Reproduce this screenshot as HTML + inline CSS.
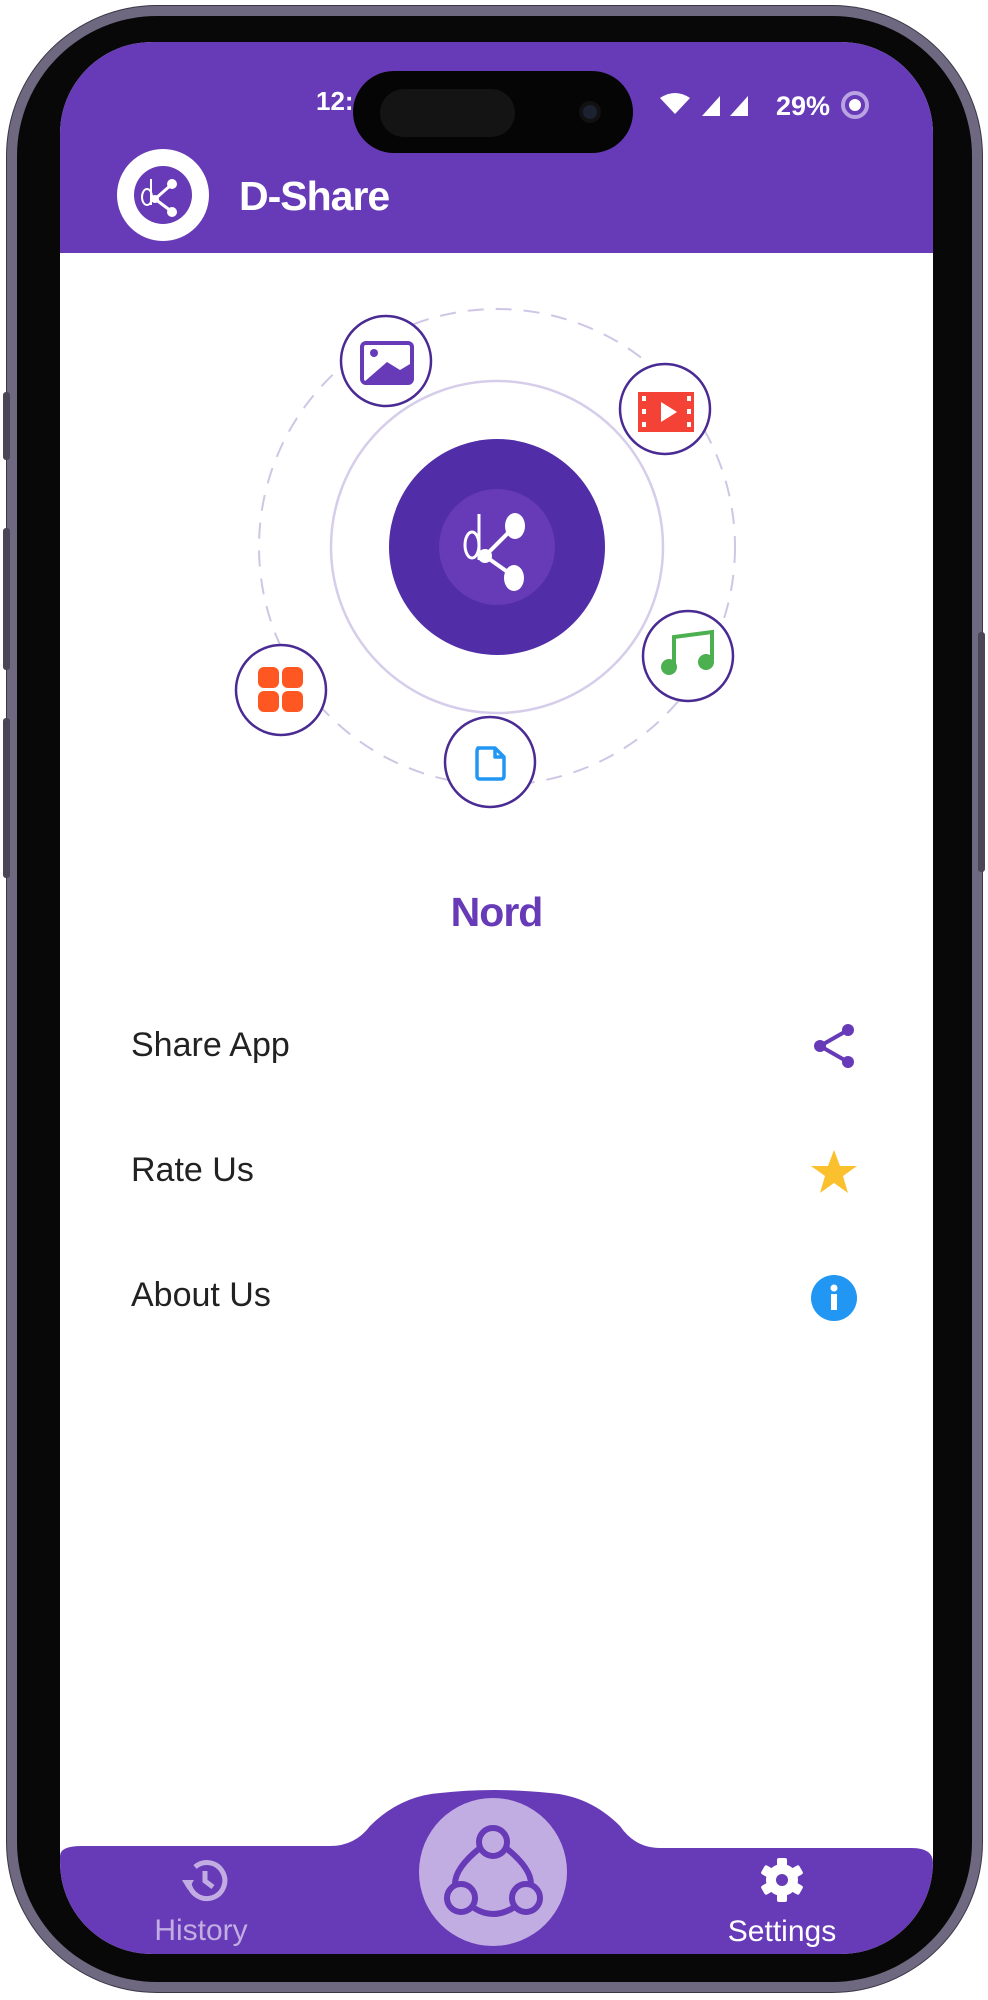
<!DOCTYPE html>
<html><head><meta charset="utf-8">
<style>
*{margin:0;padding:0;box-sizing:border-box}
body{width:988px;height:2000px;background:#fff;position:relative;overflow:hidden;font-family:"Liberation Sans",sans-serif}
.frame{position:absolute;left:7px;top:6px;width:975px;height:1986px;border-radius:150px;background:#6e6880;box-shadow:0 0 0 1px #3a3645}
.bezel{position:absolute;left:17px;top:16px;width:955px;height:1966px;border-radius:140px;background:#080808}
.screen{position:absolute;left:60px;top:42px;width:873px;height:1912px;border-radius:92px;background:#fff;overflow:hidden}
.header{position:absolute;left:0;top:0;width:873px;height:211px;background:#673ab7}
.island{position:absolute;left:353px;top:71px;width:280px;height:82px;border-radius:41px;background:#050505}
.btn{position:absolute;left:3px;width:7px;background:#4a4656;border-radius:3px}
.txt{position:absolute;left:131px;font-size:34px;color:#222;line-height:1}
</style></head><body>
<div class="frame"></div>
<div class="btn" style="top:392px;height:68px"></div>
<div class="btn" style="top:528px;height:142px"></div>
<div class="btn" style="top:718px;height:160px"></div>
<div class="btn" style="left:978px;top:632px;height:240px"></div>
<div class="bezel"></div>
<div class="screen">
  <div class="header"></div>
  <div style="position:absolute;left:256px;top:44px;color:#fff;font-size:26px;font-weight:bold">12:</div>
  <svg style="position:absolute;left:580px;top:42px" width="293" height="40" viewBox="0 0 293 40">
    <path d="M20 14 Q35 4 50 14 L35 30 Z" fill="#fff"/>
    <path d="M62 32 L80 12 L80 32 Z" fill="#fff"/>
    <path d="M90 32 L108 12 L108 32 Z" fill="#fff"/>
    <text x="136" y="31" font-family="Liberation Sans" font-size="27" font-weight="bold" fill="#fff">29%</text>
    <circle cx="215" cy="21" r="12" fill="none" stroke="#b9a3e3" stroke-width="4"/>
    <circle cx="215" cy="21" r="6" fill="#fff"/>
  </svg>
  <svg style="position:absolute;left:57px;top:107px" width="92" height="92" viewBox="0 0 92 92">
    <circle cx="46" cy="46" r="46" fill="#fff"/>
    <circle cx="46" cy="46" r="29" fill="#673ab7"/>
    <path d="M34 30 V56" stroke="#fff" stroke-width="2"/>
    <ellipse cx="30" cy="48" rx="5" ry="8" fill="none" stroke="#fff" stroke-width="2"/>
    <path d="M38 50 L54 36 M38 50 L54 62" stroke="#fff" stroke-width="3"/>
    <circle cx="38" cy="50" r="4" fill="#fff"/><circle cx="55" cy="35" r="5" fill="#fff"/><circle cx="55" cy="63" r="5" fill="#fff"/>
  </svg>
  <div style="position:absolute;left:179px;top:131px;color:#fff;font-size:41px;font-weight:bold;letter-spacing:-1px">D-Share</div>

  <svg style="position:absolute;left:0;top:211px" width="873" height="620" viewBox="0 211 873 620" >
    <g transform="translate(-60,-42)">
    <circle cx="497" cy="547" r="238" fill="none" stroke="#cfc6e6" stroke-width="2" stroke-dasharray="16 12"/>
    <circle cx="497" cy="547" r="166" fill="none" stroke="#d6cdea" stroke-width="2.5"/>
    <circle cx="497" cy="547" r="108" fill="#512da8"/>
    <circle cx="497" cy="547" r="58" fill="#673ab7"/>
    <path d="M479 514 V560" stroke="#fff" stroke-width="3"/>
    <ellipse cx="472" cy="545" rx="7" ry="13" fill="none" stroke="#fff" stroke-width="3"/>
    <path d="M485 556 L513 528 M485 556 L512 575" stroke="#fff" stroke-width="4"/>
    <circle cx="485" cy="556" r="7" fill="#fff"/><ellipse cx="515" cy="526" rx="10" ry="13" fill="#fff"/><ellipse cx="514" cy="578" rx="10" ry="13" fill="#fff"/>
    <g fill="#fff" stroke="#4a2a93" stroke-width="2.5">
      <circle cx="386" cy="361" r="45"/><circle cx="665" cy="409" r="45"/><circle cx="688" cy="656" r="45"/>
      <circle cx="490" cy="762" r="45"/><circle cx="281" cy="690" r="45"/>
    </g>
    <rect x="362" y="343" width="50" height="40" rx="4" fill="none" stroke="#673ab7" stroke-width="4"/>
    <circle cx="374" cy="353" r="4" fill="#673ab7"/>
    <path d="M364 382 L387 362 L400 370 L410 364 L410 382 Z" fill="#673ab7"/>
    <rect x="638" y="392" width="56" height="40" fill="#f44336"/>
    <g fill="#fff"><rect x="642" y="396" width="4" height="5"/><rect x="642" y="409" width="4" height="5"/><rect x="642" y="422" width="4" height="5"/>
    <rect x="687" y="396" width="4" height="5"/><rect x="687" y="409" width="4" height="5"/><rect x="687" y="422" width="4" height="5"/>
    <path d="M661 402 L677 412 L661 422 Z"/></g>
    <path d="M674 665 V637 L712 632 V660" fill="none" stroke="#4caf50" stroke-width="4"/>
    <circle cx="669" cy="667" r="8" fill="#4caf50"/><circle cx="706" cy="662" r="8" fill="#4caf50"/>
    <path d="M478 748 H495 L504 757 V776 Q504 779 501 779 H480 Q477 779 477 776 V751 Q477 748 480 748 Z M495 748 V757 H504" fill="none" stroke="#2196f3" stroke-width="3.5" stroke-linejoin="round"/>
    <g fill="#ff5722"><rect x="258" y="667" width="21" height="21" rx="6"/><rect x="282" y="667" width="21" height="21" rx="6"/>
    <rect x="258" y="691" width="21" height="21" rx="6"/><rect x="282" y="691" width="21" height="21" rx="6"/></g>
    </g>
  </svg>

  <div style="position:absolute;left:0;width:873px;top:847px;text-align:center;color:#673ab7;font-size:41px;font-weight:bold;letter-spacing:-1px">Nord</div>
  <div class="txt" style="left:71px;top:986px">Share App</div>
  <div class="txt" style="left:71px;top:1111px">Rate Us</div>
  <div class="txt" style="left:71px;top:1236px">About Us</div>
  <svg style="position:absolute;left:750px;top:980px" width="48" height="48" viewBox="0 0 48 48">
    <path d="M38 8 L10 24 L38 40" fill="none" stroke="#673ab7" stroke-width="4"/>
    <circle cx="38" cy="8" r="6" fill="#673ab7"/><circle cx="10" cy="24" r="6" fill="#673ab7"/><circle cx="38" cy="40" r="6" fill="#673ab7"/>
  </svg>
  <svg style="position:absolute;left:750px;top:1106px" width="48" height="48" viewBox="0 0 48 48">
    <path d="M24 2 L30 18 L47 18 L33 28 L38 45 L24 35 L10 45 L15 28 L1 18 L18 18 Z" fill="#fbc02d"/>
  </svg>
  <svg style="position:absolute;left:750px;top:1232px" width="48" height="48" viewBox="0 0 48 48">
    <circle cx="24" cy="24" r="23" fill="#2196f3"/>
    <circle cx="24" cy="14" r="3.5" fill="#fff"/><rect x="21" y="20" width="6" height="16" fill="#fff"/>
  </svg>

  <svg style="position:absolute;left:0;top:1709px" width="873" height="203" viewBox="0 0 873 203">
    <path d="M0 105 Q0 95 22 95 L270 95 Q295 95 310 75 Q340 45 380 42 Q433 36 490 42 Q530 45 560 75 Q575 97 600 97 L852 97 Q873 97 873 112 L873 203 L0 203 Z" fill="#673ab7"/>
    <ellipse cx="433" cy="121" rx="74" ry="74" fill="#c2ade2"/>
    <g fill="none" stroke="#673ab7" stroke-width="6">
      <circle cx="433" cy="91" r="14"/><circle cx="401" cy="147" r="14"/><circle cx="466" cy="147" r="14"/>
      <path d="M420 97 Q395 117 395 133 M446 97 Q471 117 471 133 M414 157 Q433 169 453 157"/>
    </g>
    <g transform="translate(143,128)" fill="none" stroke="#c2ade2" stroke-width="5">
      <path d="M-14 4 A18 18 0 1 0 -8 -12"/>
      <path d="M2 -8 V2 L10 8"/>
    </g>
    <path d="M122 129 L134 129 L128 139 Z" fill="#c2ade2"/>
    <text x="141" y="189" text-anchor="middle" font-family="Liberation Sans" font-size="30" fill="#c2ade2">History</text>
    <g transform="translate(722,129)">
      <g fill="#fff">
        <rect x="-5" y="-22" width="10" height="44" rx="2"/>
        <rect x="-5" y="-22" width="10" height="44" rx="2" transform="rotate(60)"/>
        <rect x="-5" y="-22" width="10" height="44" rx="2" transform="rotate(120)"/>
        <circle r="16"/>
      </g>
      <circle r="6" fill="#673ab7"/>
    </g>
    <text x="722" y="190" text-anchor="middle" font-family="Liberation Sans" font-size="30" fill="#fff">Settings</text>
  </svg>
</div>
<div class="island"></div>
<div style="position:absolute;left:380px;top:89px;width:135px;height:48px;border-radius:24px;background:#141414"></div>
<div style="position:absolute;left:579px;top:101px;width:22px;height:22px;border-radius:50%;background:#1d2233;border:4px solid #111"></div>
</body></html>
